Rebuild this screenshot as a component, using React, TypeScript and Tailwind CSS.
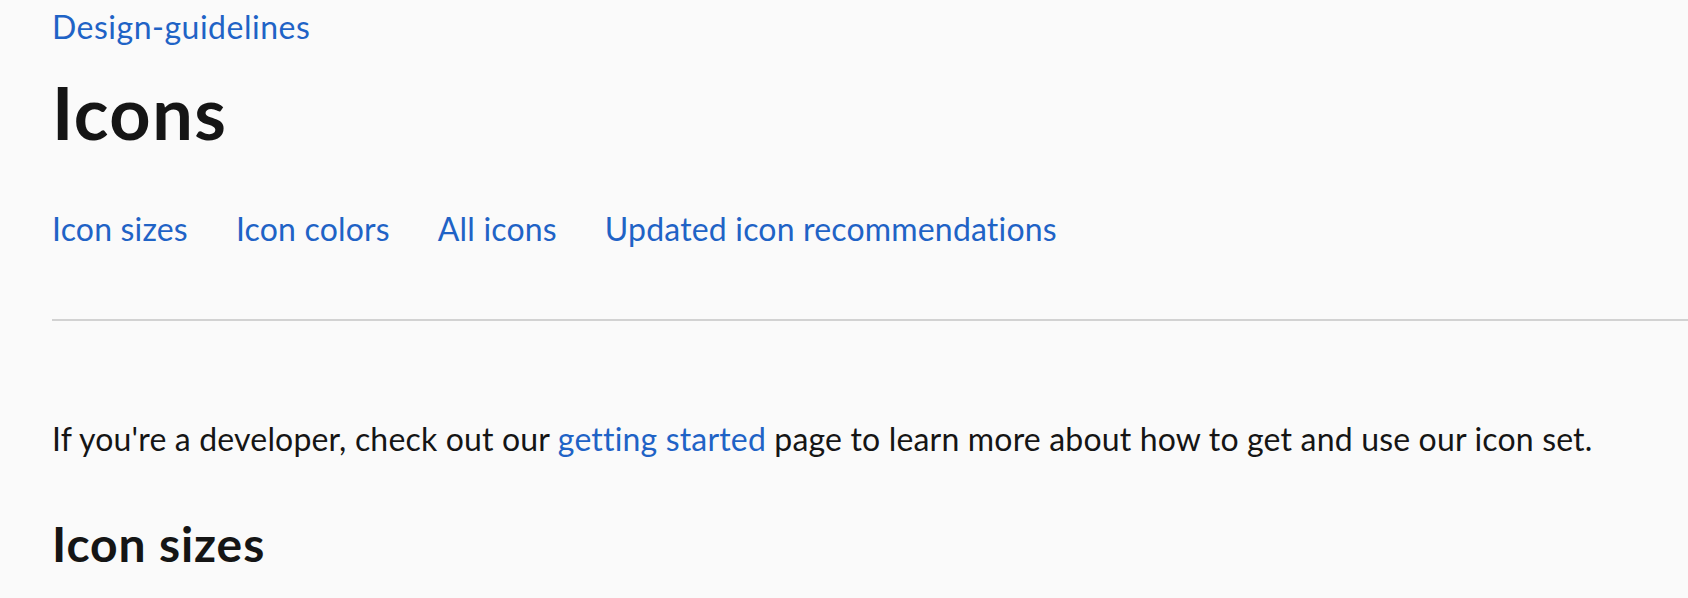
export default function App() {
  const navLinks = ["Icon sizes", "Icon colors", "All icons", "Updated icon recommendations"];

  return (
    <div className="h-[598px] w-full overflow-hidden bg-[#fafafa] pl-[52px] font-['Lato',sans-serif] text-[#151515]">
      <div className="pt-[3px] text-[32px] leading-[48px] tracking-[0.5px]">
        <a href="#" className="text-[#1f63c6]">
          Design-guidelines
        </a>
      </div>

      <h1 className="mt-[18px] text-[72px] font-bold leading-[86px] tracking-[1.5px]">Icons</h1>

      <nav className="mt-[50px] flex gap-12 text-[32px] leading-[48px] tracking-[0.18px]">
        {navLinks.map((l) => (
          <a key={l} href="#" className="text-[#1f63c6]">
            {l}
          </a>
        ))}
      </nav>

      <hr className="mt-[66px] border-0 border-t-2 border-[#d2d2d2]" />

      <p className="mt-[94px] text-[32px] leading-[48px] tracking-[0.17px]">
        If you're a developer, check out our{" "}
        <a href="#" className="text-[#1f63c6]">
          getting started
        </a>{" "}
        page to learn more about how to get and use our icon set.
      </p>

      <h2 className="mt-[52px] text-[48px] font-bold leading-[58px] tracking-[0.9px]">Icon sizes</h2>
    </div>
  );
}
